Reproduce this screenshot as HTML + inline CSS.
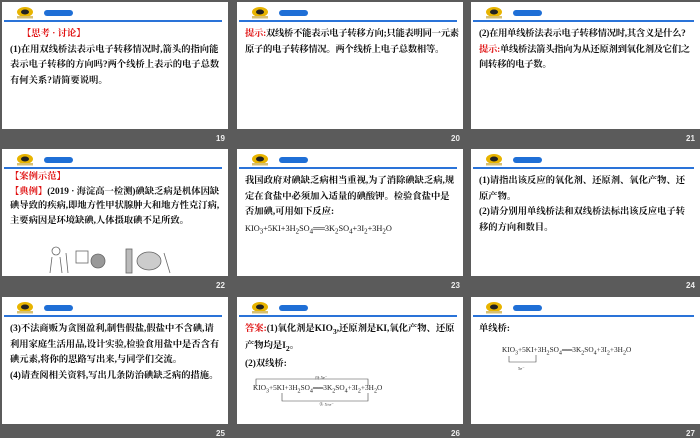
<!DOCTYPE html>
<html><head><meta charset="utf-8"><style>
*{margin:0;padding:0;box-sizing:border-box}
body{width:700px;height:438px;background:#5b5b5b;position:relative;overflow:hidden;font-family:"Liberation Serif","Noto Serif CJK SC","Noto Sans CJK SC",serif}
.s{position:absolute;width:226px;height:127px;background:#fff;overflow:hidden}
.logo{position:absolute;left:12px;top:4px;width:22px;height:13px}
.pill{position:absolute;left:42px;top:8px;width:29px;height:6px;border-radius:3px;background:#1f6fd6}
.line{position:absolute;left:2px;right:6px;top:18px;height:1.5px;background:#2a73d8}
.t{position:absolute;left:8px;top:25px;right:6px;font-size:9.3px;line-height:15.5px;font-weight:bold;color:#111}
.r{color:#e01010}
.n{position:absolute;font:bold 8px "Liberation Sans",sans-serif;color:#eee}
.eq{font-family:"Liberation Serif",serif;font-weight:normal;font-size:7.3px;color:#222;white-space:nowrap}
</style></head><body>
<div class="s" style="left:2px;top:2px">
<svg class="logo" viewBox="0 0 22 13"><ellipse cx="11" cy="6" rx="8" ry="5" fill="#e8b400"/><ellipse cx="11" cy="6" rx="4" ry="2.5" fill="#222"/><rect x="3" y="10" width="16" height="2.5" fill="#d8c070"/></svg>
<div class="pill"></div><div class="line"></div>
<div class="t"><div class="r" style="padding-left:12px">【思考 · 讨论】</div>(1)在用双线桥法表示电子转移情况时,箭头的指向能表示电子转移的方向吗?两个线桥上表示的电子总数有何关系?请简要说明。</div>
</div>
<div class="n" style="left:216px;top:134px">19</div>

<div class="s" style="left:237px;top:2px">
<svg class="logo" viewBox="0 0 22 13"><ellipse cx="11" cy="6" rx="8" ry="5" fill="#e8b400"/><ellipse cx="11" cy="6" rx="4" ry="2.5" fill="#222"/><rect x="3" y="10" width="16" height="2.5" fill="#d8c070"/></svg>
<div class="pill"></div><div class="line"></div>
<div class="t" style="right:3px;letter-spacing:-0.25px"><span class="r">提示:</span>双线桥不能表示电子转移方向;只能表明同一元素原子的电子转移情况。两个线桥上电子总数相等。</div>
</div>
<div class="n" style="left:451px;top:134px">20</div>

<div class="s" style="left:471px;top:2px;width:229px">
<svg class="logo" viewBox="0 0 22 13"><ellipse cx="11" cy="6" rx="8" ry="5" fill="#e8b400"/><ellipse cx="11" cy="6" rx="4" ry="2.5" fill="#222"/><rect x="3" y="10" width="16" height="2.5" fill="#d8c070"/></svg>
<div class="pill"></div><div class="line"></div>
<div class="t" style="right:3px;letter-spacing:-0.25px">(2)在用单线桥法表示电子转移情况时,其含义是什么?<br><span class="r">提示:</span>单线桥法箭头指向为从还原剂到氧化剂及它们之间转移的电子数。</div>
</div>
<div class="n" style="left:686px;top:134px">21</div>

<div class="s" style="left:2px;top:149px">
<svg class="logo" viewBox="0 0 22 13"><ellipse cx="11" cy="6" rx="8" ry="5" fill="#e8b400"/><ellipse cx="11" cy="6" rx="4" ry="2.5" fill="#222"/><rect x="3" y="10" width="16" height="2.5" fill="#d8c070"/></svg>
<div class="pill"></div><div class="line"></div>
<div class="t" style="top:21px;line-height:14.5px"><div class="r">【案例示范】</div><span class="r">【典例】</span>(2019 · 海淀高一检测)碘缺乏病是机体因缺碘导致的疾病,即地方性甲状腺肿大和地方性克汀病,主要病因是环境缺碘,人体摄取碘不足所致。</div>
<svg style="position:absolute;left:44px;top:94px" width="130" height="32"><g fill="none" stroke="#666" stroke-width="0.8"><circle cx="10" cy="8" r="4"/><path d="M6 14 L4 30 M14 14 L16 30 M20 10 L22 30"/><rect x="30" y="8" width="12" height="12"/><circle cx="52" cy="18" r="7" fill="#999"/><rect x="80" y="6" width="6" height="24" fill="#bbb"/><ellipse cx="103" cy="18" rx="12" ry="9" fill="#ccc"/><path d="M118 10 L124 30"/></g></svg>
</div>
<div class="n" style="left:216px;top:281px">22</div>

<div class="s" style="left:237px;top:149px">
<svg class="logo" viewBox="0 0 22 13"><ellipse cx="11" cy="6" rx="8" ry="5" fill="#e8b400"/><ellipse cx="11" cy="6" rx="4" ry="2.5" fill="#222"/><rect x="3" y="10" width="16" height="2.5" fill="#d8c070"/></svg>
<div class="pill"></div><div class="line"></div>
<div class="t">我国政府对碘缺乏病相当重视,为了消除碘缺乏病,规定在食盐中必须加入适量的碘酸钾。检验食盐中是否加碘,可用如下反应:<br><span style="font-weight:normal;font-size:8.3px">KIO<sub>3</sub>+5KI+3H<sub>2</sub>SO<sub>4</sub>══3K<sub>2</sub>SO<sub>4</sub>+3I<sub>2</sub>+3H<sub>2</sub>O</span></div>
</div>
<div class="n" style="left:451px;top:281px">23</div>

<div class="s" style="left:471px;top:149px;width:229px">
<svg class="logo" viewBox="0 0 22 13"><ellipse cx="11" cy="6" rx="8" ry="5" fill="#e8b400"/><ellipse cx="11" cy="6" rx="4" ry="2.5" fill="#222"/><rect x="3" y="10" width="16" height="2.5" fill="#d8c070"/></svg>
<div class="pill"></div><div class="line"></div>
<div class="t">(1)请指出该反应的氧化剂、还原剂、氧化产物、还原产物。<br>(2)请分别用单线桥法和双线桥法标出该反应电子转移的方向和数目。</div>
</div>
<div class="n" style="left:686px;top:281px">24</div>

<div class="s" style="left:2px;top:297px">
<svg class="logo" viewBox="0 0 22 13"><ellipse cx="11" cy="6" rx="8" ry="5" fill="#e8b400"/><ellipse cx="11" cy="6" rx="4" ry="2.5" fill="#222"/><rect x="3" y="10" width="16" height="2.5" fill="#d8c070"/></svg>
<div class="pill"></div><div class="line"></div>
<div class="t">(3)不法商贩为贪图盈利,制售假盐,假盐中不含碘,请利用家庭生活用品,设计实验,检验食用盐中是否含有碘元素,将你的思路写出来,与同学们交流。<br>(4)请查阅相关资料,写出几条防治碘缺乏病的措施。</div>
</div>
<div class="n" style="left:216px;top:429px">25</div>

<div class="s" style="left:237px;top:297px">
<svg class="logo" viewBox="0 0 22 13"><ellipse cx="11" cy="6" rx="8" ry="5" fill="#e8b400"/><ellipse cx="11" cy="6" rx="4" ry="2.5" fill="#222"/><rect x="3" y="10" width="16" height="2.5" fill="#d8c070"/></svg>
<div class="pill"></div><div class="line"></div>
<div class="t"><span class="r">答案:</span>(1)氧化剂是KIO<sub>3</sub>,还原剂是KI,氧化产物、还原产物均是I<sub>2</sub>。<br>(2)双线桥:</div>
<svg style="position:absolute;left:18px;top:79px" width="180" height="30"><g fill="none" stroke="#444" stroke-width="0.6"><path d="M1 10 V3 H113 V10 M27 17 V25 H113 V17"/></g><text x="60" y="3" font-size="4.5" fill="#333">得 5e⁻</text><text x="64" y="30" font-size="4.5" fill="#333">失 5×e⁻</text></svg>
<div class="eq" style="position:absolute;left:16px;top:86px">KIO<sub>3</sub>+5KI+3H<sub>2</sub>SO<sub>4</sub>══3K<sub>2</sub>SO<sub>4</sub>+3I<sub>2</sub>+3H<sub>2</sub>O</div>
</div>
<div class="n" style="left:451px;top:429px">26</div>

<div class="s" style="left:471px;top:297px;width:229px">
<svg class="logo" viewBox="0 0 22 13"><ellipse cx="11" cy="6" rx="8" ry="5" fill="#e8b400"/><ellipse cx="11" cy="6" rx="4" ry="2.5" fill="#222"/><rect x="3" y="10" width="16" height="2.5" fill="#d8c070"/></svg>
<div class="pill"></div><div class="line"></div>
<div class="t">单线桥:</div>
<div class="eq" style="position:absolute;left:31px;top:48px">KIO<sub>3</sub>+5KI+3H<sub>2</sub>SO<sub>4</sub>══3K<sub>2</sub>SO<sub>4</sub>+3I<sub>2</sub>+3H<sub>2</sub>O</div>
<svg style="position:absolute;left:35px;top:57px" width="40" height="18"><path d="M3 2 V8 H30 V1" fill="none" stroke="#444" stroke-width="0.6"/><text x="12" y="16" font-size="4.5" fill="#333">5e⁻</text></svg>
</div>
<div class="n" style="left:686px;top:429px">27</div>
</body></html>
